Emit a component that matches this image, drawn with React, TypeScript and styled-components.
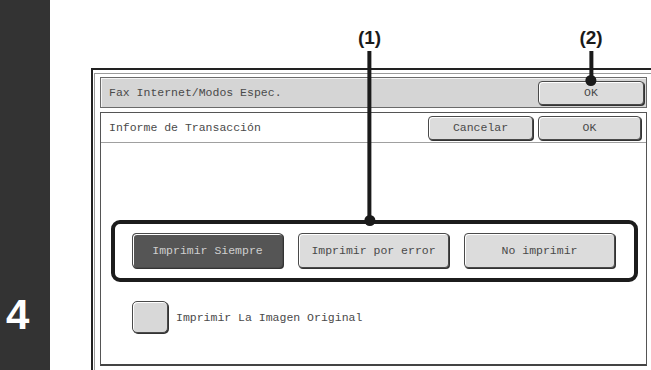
import React from "react";
import styled, { createGlobalStyle } from "styled-components";

const GlobalStyle = createGlobalStyle`
  *, *::before, *::after { box-sizing: border-box; }
  html, body { margin: 0; padding: 0; background: #fff; }
  body { width: 651px; height: 370px; overflow: hidden; }
`;

const Page = styled.div`
  display: flex;
  width: 651px;
  height: 370px;
  overflow: hidden;
  font-family: "Liberation Mono", "Courier New", monospace;
  font-size: 11.5px;
  color: #4a4a4a;
`;

const StepBar = styled.div`
  width: 50px;
  flex: none;
  background: #333333;
  display: flex;
  flex-direction: column;
  justify-content: flex-end;
  align-items: flex-start;
  padding: 0 0 35px 6px;
`;

const StepNumber = styled.span`
  font-family: "Liberation Sans", Arial, sans-serif;
  font-weight: bold;
  font-size: 42px;
  line-height: 40px;
  color: #fff;
`;

const Stage = styled.div`
  position: relative;
  flex: 1;
  padding: 68px 0 0 41px;
`;

const Frame = styled.div`
  height: 100%;
  border-top: 2px solid #222;
  border-left: 2px solid #222;
  padding: 3px 0 0 1px;
`;

const Inner = styled.div`
  height: 100%;
  border-top: 1px solid #9a9a9a;
  border-left: 1px solid #9a9a9a;
  padding: 3px 4px 4px 5px;
  display: flex;
  flex-direction: column;
  gap: 4px;
`;

const TitleBar = styled.div`
  height: 31px;
  flex: none;
  display: flex;
  align-items: center;
  justify-content: space-between;
  padding: 0 2px 0 8px;
  background: #d5d5d5;
  border: 1px solid #6a6a6a;
  box-shadow: inset 1px 1px 0 #f4f4f4;
`;

const Panel = styled.div`
  flex: 1;
  display: flex;
  flex-direction: column;
  border: 1px solid #555;
  border-bottom: 2px solid #444;
  background: #fff;
`;

const PanelHeader = styled.div`
  height: 30px;
  flex: none;
  display: flex;
  align-items: center;
  gap: 5px;
  padding: 0 5px 0 8px;
  border-bottom: 1px solid #a0a0a0;
`;

const Caption = styled.span`
  flex: 1;
  white-space: nowrap;
`;

const PanelBody = styled.div`
  flex: 1;
  padding: 77px 0 0 10px;
`;

const Key = styled.div<{ $w: number; $h?: number; $dark?: boolean }>`
  width: ${(p) => p.$w}px;
  height: ${(p) => p.$h ?? 24}px;
  flex: none;
  display: flex;
  align-items: center;
  justify-content: center;
  white-space: nowrap;
  border: 1px solid #4a4a4a;
  border-radius: 4px;
  background: ${(p) => (p.$dark ? "#555555" : "#dcdcdc")};
  color: ${(p) => (p.$dark ? "#cfcfcf" : "#4a4a4a")};
  box-shadow: inset 1px 1px 0 #fff, 1px 1px 0 #333;
`;

const ChoiceGroup = styled.div`
  width: 527px;
  display: flex;
  gap: 15px;
  padding: 9px 19px 10px 17px;
  border: 4px solid #1c1c1c;
  border-radius: 9px;
`;

const CheckRow = styled.div`
  display: flex;
  align-items: center;
  gap: 8px;
  margin: 19px 0 0 21px;
`;

const CheckBox = styled.div`
  width: 36px;
  height: 32px;
  border: 1px solid #4a4a4a;
  border-radius: 5px;
  background: #d8d8d8;
  box-shadow: inset 1px 1px 0 #fff, 1px 1px 0 #333;
`;

const Callout = styled.div<{ $x: number }>`
  position: absolute;
  top: 27px;
  left: ${(p) => p.$x}px;
  transform: translateX(-50%);
  display: flex;
  flex-direction: column;
  align-items: center;
`;

const CalloutLabel = styled.span`
  font-family: "Liberation Sans", Arial, sans-serif;
  font-weight: bold;
  font-size: 19px;
  line-height: 21px;
  color: #1a1a1a;
  margin-bottom: 3px;
`;

const CalloutLine = styled.div<{ $len: number }>`
  width: 4px;
  height: ${(p) => p.$len}px;
  background: #1a1a1a;
`;

const CalloutDot = styled.div`
  width: 11px;
  height: 11px;
  margin-top: -5px;
  border-radius: 50%;
  background: #1a1a1a;
`;

const choices = [
  { label: "Imprimir Siempre", active: true },
  { label: "Imprimir por error", active: false },
  { label: "No imprimir", active: false },
];

export default function App() {
  return (
    <>
      <GlobalStyle />
      <Page>
        <StepBar>
          <StepNumber>4</StepNumber>
        </StepBar>
        <Stage>
          <Frame>
            <Inner>
              <TitleBar>
                <Caption>Fax Internet/Modos Espec.</Caption>
                <Key $w={106}>OK</Key>
              </TitleBar>
              <Panel>
                <PanelHeader>
                  <Caption>Informe de Transacción</Caption>
                  <Key $w={105}>Cancelar</Key>
                  <Key $w={103}>OK</Key>
                </PanelHeader>
                <PanelBody>
                  <ChoiceGroup>
                    {choices.map((c) => (
                      <Key key={c.label} $w={151} $h={35} $dark={c.active}>
                        {c.label}
                      </Key>
                    ))}
                  </ChoiceGroup>
                  <CheckRow>
                    <CheckBox />
                    <span>Imprimir La Imagen Original</span>
                  </CheckRow>
                </PanelBody>
              </Panel>
            </Inner>
          </Frame>
          <Callout $x={319.5}>
            <CalloutLabel>(1)</CalloutLabel>
            <CalloutLine $len={169} />
            <CalloutDot />
          </Callout>
          <Callout $x={541}>
            <CalloutLabel>(2)</CalloutLabel>
            <CalloutLine $len={29} />
            <CalloutDot />
          </Callout>
        </Stage>
      </Page>
    </>
  );
}
